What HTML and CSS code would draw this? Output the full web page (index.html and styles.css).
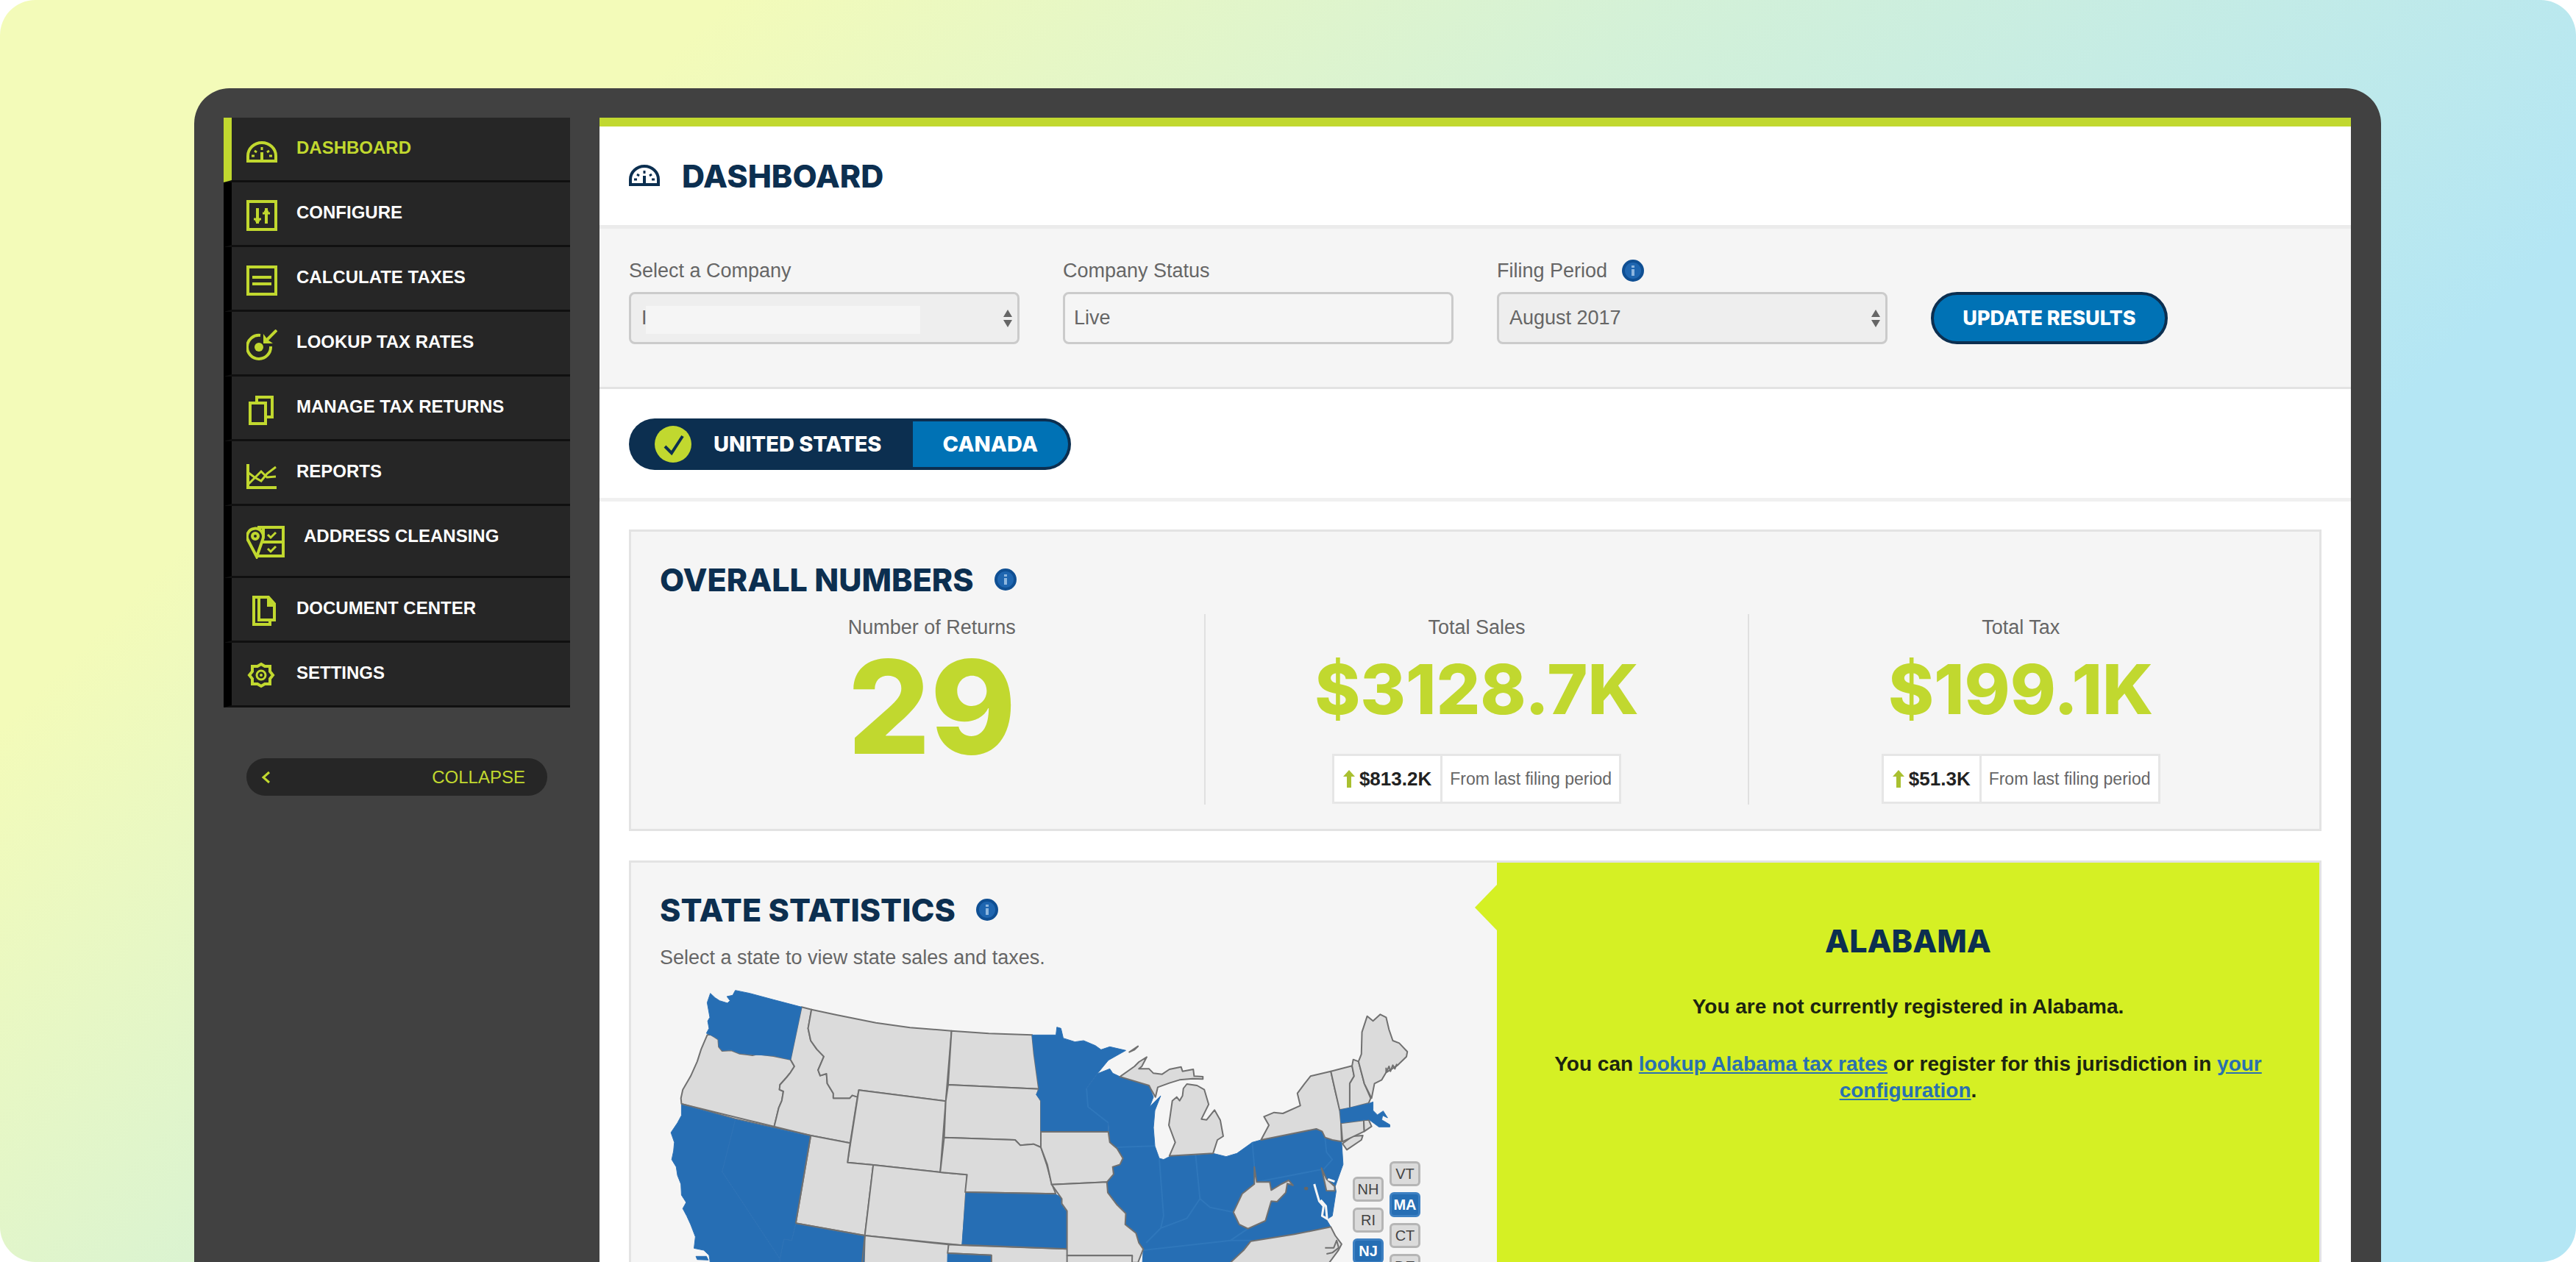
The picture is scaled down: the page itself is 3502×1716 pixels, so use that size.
FILE: index.html
```html
<!DOCTYPE html>
<html lang="en">
<head>
<meta charset="utf-8">
<meta name="viewport" content="width=device-width, initial-scale=1">
<title>Dashboard</title>
<link rel="stylesheet" href="styles.css">
</head>
<body>
<svg class="defs" width="0" height="0" aria-hidden="true">
  <symbol id="gauge" viewBox="0 0 42 30">
    <g fill="none" stroke="currentColor">
      <path d="M2 27V20A19 18 0 0 1 40 20V27Z" stroke-width="4"/>
      <path d="M21 27V15" stroke-width="4"/>
      <path d="M7 20h4M31 20h4M11 13l3 2M31 13l-3 2M21 8v4" stroke-width="3"/>
    </g>
  </symbol>
  <symbol id="info" viewBox="0 0 30 30">
    <circle cx="15" cy="15" r="15" fill="#0f4f93"/>
    <circle cx="15" cy="15" r="11" fill="#1f66b0"/>
    <path d="M15 8v3M15 13v9" stroke="#8db6de" stroke-width="4"/>
  </symbol>
  <symbol id="updown" viewBox="0 0 12 24">
    <path d="M6 0l6 10H0zM6 24l6-10H0z" fill="#666"/>
  </symbol>
  <symbol id="rise" viewBox="0 0 16 24">
    <path d="M8 0l8 9h-5v15H5V9H0z" fill="#a9c030"/>
  </symbol>
</svg>
<div class="stage">
  <div class="device">
    <aside class="sidebar">
      <nav>
        <ul class="menu">
          <li class="menu-item active"><a href="#"><svg class="icon" viewBox="0 0 42 42"><use href="#gauge" x="0" y="8" width="42" height="30"/></svg><span>DASHBOARD</span></a></li>
          <li class="menu-item"><a href="#"><svg class="icon" viewBox="0 0 42 42"><g fill="none" stroke="currentColor"><path d="M2 2h38v38H2z" stroke-width="4"/><path d="M15 11v21M27 11v21" stroke-width="4"/><path d="M10 26h10M22 18h10M12 28h6M24 16h6" stroke-width="3"/></g></svg><span>CONFIGURE</span></a></li>
          <li class="menu-item"><a href="#"><svg class="icon" viewBox="0 0 42 42"><path d="M2 3h38v37H2zM8 17h26M8 26h26" fill="none" stroke="currentColor" stroke-width="4"/></svg><span>CALCULATE TAXES</span></a></li>
          <li class="menu-item"><a href="#"><svg class="icon" viewBox="0 0 42 42"><g fill="none" stroke="currentColor" stroke-width="4"><path d="M19 8A16 16 0 1 0 33 23"/><path d="M41 1L28 14"/></g><circle cx="17" cy="24" r="6" fill="currentColor"/><path d="M23 6v13h13l-7-5z" fill="currentColor"/></svg><span>LOOKUP TAX RATES</span></a></li>
          <li class="menu-item"><a href="#"><svg class="icon" viewBox="0 0 42 42"><path d="M5 12h21v28H5zM14 12V4h21v27h-9" fill="none" stroke="currentColor" stroke-width="4"/></svg><span>MANAGE TAX RETURNS</span></a></li>
          <li class="menu-item"><a href="#"><svg class="icon" viewBox="0 0 42 42"><g fill="none" stroke="currentColor" stroke-width="4"><path d="M2 7v32h39"/><path d="M3 34L20 17l8 8 12-1M3 19l8 6 9 5 8-10L40 11" stroke-width="3"/></g></svg><span>REPORTS</span></a></li>
          <li class="menu-item tall"><a href="#"><svg class="icon wide" viewBox="0 0 52 48"><g fill="none" stroke="currentColor" stroke-width="4"><path d="M14 45L3 24A11 11 0 1 1 22 22Z"/><circle cx="12" cy="17" r="4"/><path d="M15 5h35v39H13M22 25h28M23 6v10"/><path d="M29 15l4 4 7-7M29 34l4 4 7-7" stroke-width="3"/></g></svg><span>ADDRESS CLEANSING</span></a></li>
          <li class="menu-item"><a href="#"><svg class="icon" viewBox="0 0 42 42"><path d="M17 2h13l8 9v22H17zM17 2h-7v37h22v-6" fill="none" stroke="currentColor" stroke-width="4"/><path d="M28 1v14h11z" fill="currentColor"/></svg><span>DOCUMENT CENTER</span></a></li>
          <li class="menu-item"><a href="#"><svg class="icon" viewBox="0 0 42 42"><g fill="none" stroke="currentColor" stroke-width="4"><path d="M20 5l5 3h7v7l4 5-4 5v7h-7l-5 3-5-3H8v-7l-4-5 4-5V8h7z"/><circle cx="20" cy="20" r="6" stroke-width="3"/></g><circle cx="20" cy="20" r="2" fill="currentColor"/></svg><span>SETTINGS</span></a></li>
        </ul>
      </nav>
      <button class="collapse" type="button"><svg width="14" height="18" viewBox="0 0 14 18"><path d="M12 2L4 9l8 7" fill="none" stroke="currentColor" stroke-width="3"/></svg><span>COLLAPSE</span></button>
    </aside>
    <main class="content">
      <header class="page-head">
        <svg class="gauge" viewBox="0 0 42 30"><use href="#gauge"/></svg>
        <h1 class="title">DASHBOARD</h1>
      </header>
      <form class="filters">
        <div class="field">
          <label for="company">Select a Company</label>
          <div class="control masked"><select id="company"><option>I</option></select><svg class="arrows"><use href="#updown"/></svg></div>
        </div>
        <div class="field">
          <label for="status">Company Status</label>
          <div class="control"><input id="status" type="text" value="Live"></div>
        </div>
        <div class="field">
          <label for="period">Filing Period <svg class="info"><use href="#info"/></svg></label>
          <div class="control"><select id="period"><option>August 2017</option></select><svg class="arrows"><use href="#updown"/></svg></div>
        </div>
        <button class="update" type="button">UPDATE RESULTS</button>
      </form>
      <div class="country-row">
        <div class="toggle">
          <button class="country chosen" type="button"><svg class="tick" viewBox="0 0 50 50"><circle cx="25" cy="25" r="25" fill="#c1d82f"/><path d="M14 28l9 9L38 14" fill="none" stroke="#0c2f50" stroke-width="4"/></svg>UNITED STATES</button>
          <button class="country" type="button">CANADA</button>
        </div>
      </div>
      <div class="cards">
        <section class="card overall">
          <h2 class="title">OVERALL NUMBERS <svg class="info"><use href="#info"/></svg></h2>
          <div class="metrics">
            <div class="metric"><p class="caption">Number of Returns</p><p class="count">29</p></div>
            <div class="metric"><p class="caption">Total Sales</p><p class="amount">$3128.7K</p>
              <div class="delta"><strong><svg class="rise"><use href="#rise"/></svg>$813.2K</strong><span>From last filing period</span></div></div>
            <div class="metric"><p class="caption">Total Tax</p><p class="amount">$199.1K</p>
              <div class="delta"><strong><svg class="rise"><use href="#rise"/></svg>$51.3K</strong><span>From last filing period</span></div></div>
          </div>
        </section>
        <section class="card states">
          <div class="map-side">
            <h2 class="title">STATE STATISTICS <svg class="info"><use href="#info"/></svg></h2>
            <p class="hint">Select a state to view state sales and taxes.</p>
            <div class="map-box">
              <svg class="map" viewBox="897 1330 1120 500" role="img" aria-label="Map of the United States">
                <g transform="translate(880 1320) scale(.357143 .333333)">
                  <path class="off" d="M228,262L240,260 255,270 270,280 272,310 285,327 320,325 350,338 400,345 420,340 480,348 545,362 560,390 545,415 530,435 505,465 503,485 518,492 512,530 500,560 482,640 335,605 130,543 128,520 135,485 165,430 190,370 205,320Z"/>
                  <path class="off" d="M587,148L625,158 612,235 622,285 645,320 672,350 650,405 658,428 682,420 685,460 708,500 708,520 770,520 780,508 800,515 772,703 622,672 482,640 500,560 512,530 518,492 503,485 505,465 530,435 545,415 560,390 545,362Z"/>
                  <path class="off" d="M625,158L720,180 870,212 1000,232 1158,245 1136,532 805,487 800,515 780,508 770,520 708,520 708,500 685,460 682,420 658,428 650,405 672,350 645,320 622,285 612,235Z"/>
                  <path class="off" d="M805,487L1136,532 1115,822 860,792 762,782Z"/>
                  <path class="off" d="M622,672L772,703 762,782 860,792 828,1080 565,1030Z"/>
                  <path class="off" d="M860,792L1115,822 1217,832 1200,1120 828,1080Z"/>
                  <path class="off" d="M828,1080L1147,1117 1137,1700 812,1700Z"/>
                  <path class="off" d="M1147,1117L1200,1120 1600,1135V1500H1308V1160L1143,1152Z"/>
                  <path class="off" d="M1158,245L1300,256 1465,262 1472,340 1490,482 1145,465Z"/>
                  <path class="off" d="M1145,465L1490,482 1483,505 1498,530 1498,720 1470,707 1420,712 1400,690 1130,680 1136,532Z"/>
                  <path class="off" d="M1130,680L1400,690 1420,712 1470,707 1498,720 1520,790 1540,870 1555,910 1210,903 1217,832 1115,822Z"/>
                  <path class="on" d="M240,92L258,110 275,122 305,132 315,122 303,105 325,100 335,80 390,92 480,118 587,148 545,362 480,346 400,342 350,336 320,323 285,325 273,310 271,280 255,269 235,259 225,255 235,235 230,205 238,190 228,130Z"/>
                  <path class="on" d="M130,545L335,607 285,820 505,1175V1500H400L240,1195 235,1160 215,1140 178,1132 183,1085 165,1035 150,1000 135,970 148,945 130,915 128,870 115,835 110,800 93,770 100,735 103,700 90,660 115,620 130,590ZM185,1165L225,1165 232,1180 190,1178Z"/>
                  <path class="on" d="M335,607L482,642 620,674 565,1030 550,1100 520,1095 505,1175 285,820Z"/>
                  <path class="on" d="M565,1032L826,1082 812,1700H505V1175L520,1095 550,1100Z"/>
                  <path class="on" d="M1213,905L1555,912 1578,925 1575,950 1598,985 1600,1133 1198,1116Z"/>
                  <path class="on" d="M1143,1155L1308,1162V1500H1137Z"/>
                  <path class="edge" d="M130,543L622,672M565,1030L828,1080 812,1250M1143,1152L1310,1160V1250M1210,903L1555,910M1198,1118L1600,1135M622,672L565,1030"/>
                </g>
                <g transform="translate(1400 1320) scale(.395411 .333333)">
                  <path class="on" d="M8,262L90,262 93,230 107,235 115,275 155,290 185,285 225,305 245,322 275,310 330,325 270,365 232,420 195,480 200,555 270,620V655H38V530L22,505 32,482 15,340Z"/>
                  <path class="on" d="M232,420L275,400 285,418 310,432 410,468 425,515 412,555 450,510 430,570 425,640 430,715 445,765 460,770 485,755 570,752 630,745 675,758 712,745 765,700 795,690 985,645 1005,655 1040,690 1072,697 1077,790 1050,880 1053,900 1040,1000 1020,1015 1035,1045 910,1075 760,1103 735,1140 690,1190 560,1500H372L390,1135 375,1110 365,1070 328,1035 330,990 300,955 268,905 265,862 288,830 285,800 310,790 320,765 275,700 270,620 200,555 195,480Z"/>
                  <path class="seam" d="M195,480L200,555 270,620M300,720L430,715M445,765L460,1000 450,1050 400,1110M570,752L585,930 540,1010 450,1050M585,930L620,965 700,985M390,1140L690,1100 750,1052M690,1100H760M765,700L772,800M780,862L1005,810M1015,680L1020,740 1040,770 1010,810"/>
                  <path class="off" d="M38,657H270L275,700 300,725 320,765 310,790 285,800 288,830 265,862 75,872 60,790 38,720Z"/>
                  <path class="off" d="M75,872L265,862 268,905 300,955 330,990 328,1035 365,1070 375,1110 390,1135 372,1190H350L352,1162H128V980L110,950V930Z"/>
                  <path class="off" d="M128,1162H352L348,1500H128Z"/>
                  <path class="off" d="M772,800L780,862 825,862 830,895 865,870 890,855 905,875 885,868 880,905 850,942 830,940 810,1020 750,1052 720,1035 700,985 730,910 772,870Z"/>
                  <path class="off" d="M1003,805L1020,850 1048,880V898L1020,897Z"/>
                  <path class="off" d="M760,1103L910,1075 1035,1045 1050,1080 1072,1115 1060,1142 1030,1190 900,1500H560L690,1190 735,1140Z"/>
                  <path class="edge" d="M1015,1130L1045,1130 1055,1100 1062,1130 1040,1150 1020,1155"/>
                  <path class="off" d="M795,690L822,630 805,595 840,578 870,582 930,550 920,500 945,460 965,430 1035,410 1050,490 1065,560 1070,620 1072,697 1040,690 1015,680 1005,655 985,645Z"/>
                  <path class="off" d="M1075,705L1110,675 1145,672 1140,690 1090,730Z"/>
                  <path class="off" d="M1035,410L1108,388 1115,430 1100,460V560L1065,568 1050,490Z"/>
                  <path class="off" d="M1108,388L1112,362 1130,370 1150,460 1172,520 1165,540 1100,560V460L1115,430Z"/>
                  <path class="off" d="M1130,370L1140,340 1142,250 1160,185 1180,205 1205,178 1225,190 1235,240 1248,285 1270,295 1298,330 1295,350 1265,385 1225,415 1210,445 1185,460 1175,520 1150,460Z"/>
                  <path class="edge" d="M1225,395V415L1235,390 1240,410 1248,385 1255,400 1262,380"/>
                  <path class="off" d="M1070,622L1148,610 1150,655 1075,697Z"/>
                  <path class="off" d="M1148,610L1165,608 1175,635 1150,655Z"/>
                  <path class="on" d="M1067,568L1165,542 1180,535V570L1195,588 1215,572 1230,600 1213,590 1210,608 1238,628V637H1200L1165,606 1070,620Z"/>
                  <path class="off" d="M310,432L360,390 375,372 402,352 385,390 375,400 410,400 425,418 455,422 480,402 520,392 525,410 562,402 565,430 595,432V442L560,440 515,445 480,458 440,475 432,515 415,480 410,468Z"/>
                  <path class="off" d="M342,332L372,308 360,322Z"/>
                  <path class="off" d="M540,462L575,468 600,485 615,545 590,605 608,608 635,568 655,610 665,675 645,690 630,745 480,755 500,700 478,630 490,530 505,515 515,530 525,510 528,480Z"/>
                  <path class="bay" d="M978,870L985,900 995,940 1010,960 1005,1000 1022,1012 1018,960 1000,935M1025,850L1048,860"/>
                  <circle cx="950" cy="888" r="7" fill="#666"/>
                </g>
              </svg>
              <div class="small-states">
                <div class="stack low">
                  <button type="button">NH</button><button type="button">RI</button><button type="button" class="on">NJ</button>
                </div>
                <div class="stack">
                  <button type="button">VT</button><button type="button" class="on">MA</button><button type="button">CT</button><button type="button">DE</button>
                </div>
              </div>
            </div>
          </div>
          <div class="state-panel">
            <h3 class="title">ALABAMA</h3>
            <p class="not-registered">You are not currently registered in Alabama.</p>
            <p class="advice">You can <a href="#">lookup Alabama tax rates</a> or register for this jurisdiction in <a href="#">your configuration</a>.</p>
          </div>
        </section>
      </div>
    </main>
  </div>
</div>
</body>
</html>
```
FILE: styles.css
```css
* { box-sizing: border-box; }
body {
  margin: 0;
  background: #fff;
  color: #666;
  font: 27px/36px "Liberation Sans", Arial, sans-serif;
}
p, h1, h2, h3, ul { margin: 0; padding: 0; }
button, input, select { font: inherit; color: inherit; margin: 0; border: 0; }
svg { display: block; flex: none; }
.defs { position: absolute; }

.stage {
  height: 100vh;
  overflow: hidden;
  padding: 120px 265px 0 264px;
  border-radius: 48px;
  background: linear-gradient(135deg, #f3fbb9 19%, #d4f1d7 43%, #b4e6f4 73%);
}
.device {
  display: flex;
  gap: 40px;
  min-height: 100%;
  padding: 40px 41px 0 40px;
  border-radius: 48px 48px 0 0;
  background: #414141;
}

/* sidebar */
.sidebar { flex: none; width: 471px; }
.menu { list-style: none; }
.menu-item {
  height: 88px;
  border-left: 11px solid #000;
  border-bottom: 3px solid #101010;
  background: #262626;
}
.menu-item.tall { height: 98px; }
.menu-item.active { border-left-color: #c1d82f; }
.menu-item a {
  display: flex;
  gap: 26px;
  padding: 24px 0 0 20px;
  color: #c1d82f;
  text-decoration: none;
}
.icon { width: 42px; height: 42px; }
.icon.wide { width: 52px; height: 48px; }
.menu-item span {
  color: #fff;
  font-weight: 700;
  font-size: 24px;
  line-height: 34px;
}
.menu-item.active span { color: #c1d82f; }
.collapse {
  display: flex;
  align-items: center;
  justify-content: space-between;
  width: 409px;
  height: 51px;
  margin: 69px 0 0 31px;
  padding: 0 30px 0 19px;
  border-radius: 26px;
  background: #262626;
  color: #c1d82f;
  font-size: 24px;
}

/* main column */
.content { flex: 1; min-width: 0; background: #fff; }
.title {
  display: flex;
  align-items: center;
  gap: 28px;
  color: #0c2f50;
  font: 800 43px/48px Inter, sans-serif;
}
.info { width: 30px; height: 30px; }
.page-head {
  display: flex;
  align-items: center;
  gap: 30px;
  height: 151px;
  padding-left: 40px;
  border-top: 12px solid #c1d82f;
  border-bottom: 5px solid #ebebeb;
}
.gauge { width: 42px; height: 30px; color: #0c2f50; }
.filters {
  display: flex;
  align-items: flex-end;
  gap: 59px;
  padding: 41px 40px 58px;
  border-bottom: 3px solid #e3e3e3;
  background: #f5f5f5;
}
.field { flex: 0 1 531px; }
.field label { display: flex; align-items: center; gap: 20px; height: 32px; margin-bottom: 13px; }
.control { position: relative; }
.control select, .control input {
  appearance: none;
  display: block;
  width: 100%;
  height: 71px;
  padding: 0 14px;
  border: 3px solid #cbcbcb;
  border-radius: 8px;
  background: #eee;
}
.control input { padding: 0 12px; background: #f5f5f5; }
.control select { padding-bottom: 2px; }
.arrows { position: absolute; right: 10px; top: 24px; width: 12px; height: 24px; }
.masked::after {
  content: "";
  position: absolute;
  left: 23px;
  top: 19px;
  width: 373px;
  height: 38px;
  background: #f5f5f5;
}
.update {
  width: 322px;
  height: 71px;
  border: 4px solid #0c2f50;
  border-radius: 36px;
  background: #0072b5;
  color: #fff;
  font: 800 27px/36px Inter, sans-serif;
  padding: 0;
  white-space: nowrap;
}
.country-row { padding: 40px 40px 38px; border-bottom: 5px solid #f0f0f0; }
.toggle {
  display: inline-flex;
  vertical-align: top;
  height: 70px;
  padding: 4px;
  border-radius: 35px;
  background: #0c2f50;
}
.country {
  display: flex;
  align-items: center;
  gap: 30px;
  padding: 0 41px;
  border-radius: 0 31px 31px 0;
  background: #0072b5;
  color: #fff;
  font: 800 29px/36px Inter, sans-serif;
}
.country.chosen { padding: 0 42px 0 31px; background: transparent; }
.tick { width: 50px; height: 50px; }

/* cards */
.cards { display: grid; gap: 40px; padding: 38px 40px 0; }
.card { border: 3px solid #e3e3e3; background: #f5f5f5; }
.overall { padding: 41px 37px 33px 39px; }
.metrics { display: grid; grid-template-columns: repeat(3, 1fr); margin-top: 23px; }
.metric {
  display: flex;
  flex-direction: column;
  align-items: center;
  min-height: 259px;
}
.metric + .metric { border-left: 2px solid #e0e0e0; }
.count { color: #c1d82f; font: 800 176px/180px Inter, sans-serif; }
.amount { color: #c1d82f; font: 800 94px/132px Inter, sans-serif; }
.delta { display: flex; height: 68px; margin-top: 22px; border: 3px solid #e6e6e6; background: #fff; }
.delta strong { display: flex; align-items: center; gap: 6px; padding: 0 12px; color: #222; font-size: 26px; }
.delta span { display: flex; align-items: center; padding: 0 10px; border-left: 3px solid #e6e6e6; font-size: 23px; }
.rise { width: 16px; height: 24px; }

.states { display: grid; grid-template-columns: 1177fr 1118fr; }
.map-side { padding: 40px 0 0 39px; }
.hint { margin-top: 23px; }
.map-box { position: relative; margin-top: 10px; }
.map { width: 100%; max-width: 1120px; height: auto; }
.map path { vector-effect: non-scaling-stroke; stroke-linejoin: round; }
.map .off { fill: #dbdbdb; stroke: #707070; stroke-width: 2px; }
.map .on { fill: #266eb4; stroke: #2d72b6; stroke-width: 1px; }
.map .edge { fill: none; stroke: #707070; stroke-width: 2px; }
.map .seam { fill: none; stroke: #2f77bb; stroke-width: 2px; }
.map .bay { fill: none; stroke: #f5f5f5; stroke-width: 3px; }
.small-states { position: absolute; left: 942px; top: 249px; display: flex; gap: 8px; }
.stack { display: grid; gap: 8px; align-content: start; }
.stack.low { padding-top: 21px; }
.stack button {
  width: 42px;
  height: 34px;
  padding: 0;
  border: 3px solid #b5b5b5;
  border-radius: 6px;
  background: #dbdbdb;
  color: #444;
  font-size: 20px;
  line-height: 28px;
}
.stack .on { border-color: #3d80c2; background: #266eb4; color: #fff; font-weight: 700; }

.state-panel {
  position: relative;
  padding: 82px 60px 0;
  background: #d5f024;
  color: #1c2410;
  font-weight: 700;
  font-size: 28px;
  text-align: center;
}
.state-panel::before {
  content: "";
  position: absolute;
  left: -30px;
  top: 30px;
  border: solid transparent;
  border-width: 31px 30px 31px 0;
  border-right-color: #d5f024;
}
.state-panel .title { justify-content: center; }
.not-registered { margin-top: 48px; }
.advice { margin-top: 42px; }
.state-panel a { color: #2a70b0; }
```
